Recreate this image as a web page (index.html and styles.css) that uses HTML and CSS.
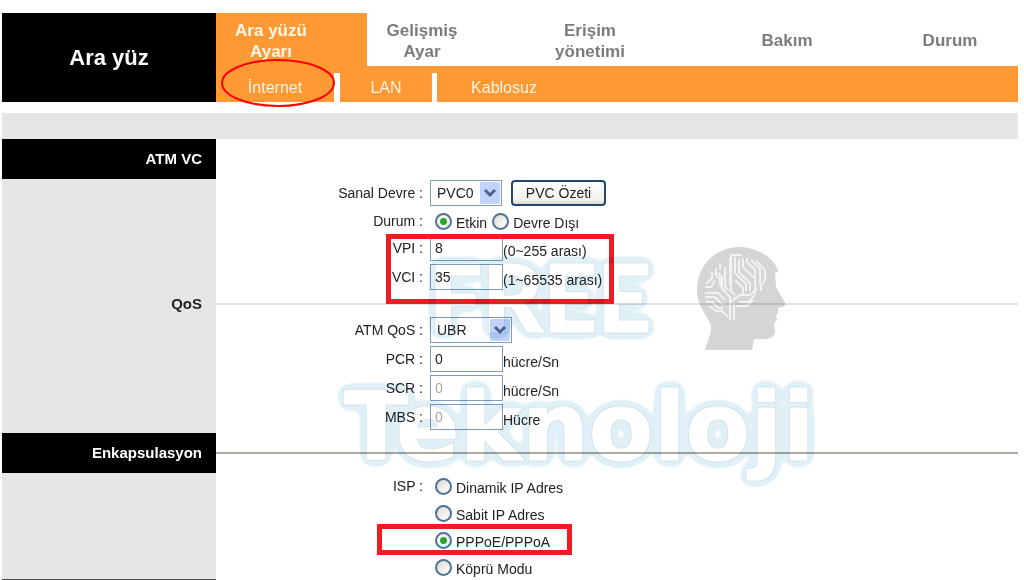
FILE: index.html
```html
<!DOCTYPE html>
<html lang="tr">
<head>
<meta charset="utf-8">
<title>Ara yüz</title>
<link rel="stylesheet" href="styles.css">
</head>
<body>
<div class="page">
  <header class="header">
    <h1 class="brand">Ara yüz</h1>
    <div class="menus">
      <nav class="tabs">
        <a class="tab tab-active" href="#"><span class="tab-text">Ara yüzü Ayarı</span></a>
        <a class="tab" href="#"><span class="tab-text">Gelişmiş Ayar</span></a>
        <a class="tab" href="#"><span class="tab-text">Erişim yönetimi</span></a>
        <a class="tab" href="#"><span class="tab-text">Bakım</span></a>
        <a class="tab" href="#"><span class="tab-text">Durum</span></a>
      </nav>
      <nav class="submenu">
        <a class="sub sub-internet" href="#">İnternet</a>
        <a class="sub sub-lan" href="#">LAN</a>
        <a class="sub sub-wifi" href="#">Kablosuz</a>
      </nav>
      <svg class="ring" viewBox="0 0 116 49" aria-hidden="true"><ellipse cx="58" cy="24" rx="56" ry="23"/></svg>
    </div>
  </header>
  <div class="strip"></div>

  <form class="settings">
    <div class="row heading">
      <h2 class="side side-dark">ATM VC</h2>
    </div>
    <div class="row">
      <div class="side"></div>
      <div class="fields fields-vc">
        <div class="field">
          <label class="name" for="pvc">Sanal Devre :</label>
          <div class="control">
            <span class="picker picker-small">
              <select id="pvc"><option>PVC0</option></select>
              <svg class="arrow" viewBox="0 0 20 22" aria-hidden="true"><rect width="20" height="22" rx="2"/><path d="M5 8l5 5 5-5"/></svg>
            </span>
            <button class="button" type="button">PVC Özeti</button>
          </div>
        </div>
        <div class="field field-status">
          <span class="name">Durum :</span>
          <div class="control">
            <label class="choice"><input type="radio" name="status" checked><span>Etkin</span></label>
            <label class="choice"><input type="radio" name="status"><span>Devre Dışı</span></label>
          </div>
        </div>
        <div class="group marked">
          <div class="field">
            <label class="name" for="vpi">VPI :</label>
            <div class="control"><input class="text" id="vpi" type="text" value="8"><span class="unit">(0~255 arası)</span></div>
          </div>
          <div class="field">
            <label class="name" for="vci">VCI :</label>
            <div class="control"><input class="text" id="vci" type="text" value="35"><span class="unit">(1~65535 arası)</span></div>
          </div>
        </div>
      </div>
    </div>

    <div class="row heading-light">
      <h2 class="side">QoS</h2>
      <hr class="rule">
    </div>
    <div class="row">
      <div class="side"></div>
      <div class="fields fields-qos">
        <div class="field">
          <label class="name" for="qos">ATM QoS :</label>
          <div class="control">
            <span class="picker picker-wide">
              <select id="qos"><option>UBR</option></select>
              <svg class="arrow" viewBox="0 0 20 22" aria-hidden="true"><rect width="20" height="22" rx="2"/><path d="M5 8l5 5 5-5"/></svg>
            </span>
          </div>
        </div>
        <div class="field">
          <label class="name" for="pcr">PCR :</label>
          <div class="control"><input class="text" id="pcr" type="text" value="0"><span class="unit">hücre/Sn</span></div>
        </div>
        <div class="field">
          <label class="name" for="scr">SCR :</label>
          <div class="control"><input class="text" id="scr" type="text" value="0" disabled><span class="unit">hücre/Sn</span></div>
        </div>
        <div class="field">
          <label class="name" for="mbs">MBS :</label>
          <div class="control"><input class="text" id="mbs" type="text" value="0" disabled><span class="unit">Hücre</span></div>
        </div>
      </div>
    </div>

    <div class="row heading">
      <h2 class="side side-dark">Enkapsulasyon</h2>
      <hr class="rule rule-dark">
    </div>
    <div class="row">
      <div class="side side-last"></div>
      <div class="fields fields-isp">
        <div class="field field-choice">
          <span class="name">ISP :</span>
          <div class="control"><label class="choice"><input type="radio" name="isp"><span>Dinamik IP Adres</span></label></div>
        </div>
        <div class="field field-choice">
          <span class="name"></span>
          <div class="control"><label class="choice"><input type="radio" name="isp"><span>Sabit IP Adres</span></label></div>
        </div>
        <div class="field field-choice marked marked-isp">
          <span class="name"></span>
          <div class="control"><label class="choice"><input type="radio" name="isp" checked><span>PPPoE/PPPoA</span></label></div>
        </div>
        <div class="field field-choice">
          <span class="name"></span>
          <div class="control"><label class="choice"><input type="radio" name="isp"><span>Köprü Modu</span></label></div>
        </div>
      </div>
    </div>

    <svg class="watermark" viewBox="0 0 500 260" aria-hidden="true">
      <defs>
        <filter id="halo" filterUnits="userSpaceOnUse" x="0" y="0" width="500" height="260" color-interpolation-filters="sRGB">
          <feGaussianBlur in="SourceAlpha" stdDeviation="6" result="soft"/>
          <feComponentTransfer in="soft" result="wide"><feFuncA type="linear" slope="14" intercept="-1"/></feComponentTransfer>
          <feFlood flood-color="#dff0f7"/>
          <feComposite in2="wide" operator="in" result="blue"/>
          <feMorphology in="SourceAlpha" operator="dilate" radius="1" result="thin"/>
          <feFlood flood-color="#d9e4ec"/>
          <feComposite in2="thin" operator="in" result="edge"/>
          <feMerge><feMergeNode in="blue"/><feMergeNode in="edge"/><feMergeNode in="SourceGraphic"/></feMerge>
        </filter>
      </defs>
      <g class="words" filter="url(#halo)">
        <text class="word-top" x="97" y="91">FREE</text>
        <text class="word-bottom" x="12" y="219">Teknoloji</text>
      </g>
      <path class="head" d="M373 109C376 99 380 91 379 84C375 75 366 65 365 52C364 27 380 7 407 6C424 6 444 17 446 31L443 32L444 46L453 62C454 65 451 66 446 67L446 72L444 75L445 79L442 82L443 90C443 98 434 99 422 98L420 109Z"/>
      <path class="circuit" d="M398 79V56L390 48V36L386 32M402 79V62M397 50L393 45V26M398 44V17M388 22V29M384 27V34L388 38V44L393 50M380 31V37L374 43M383 40L379 46H373M373 52H386L393 59M373 56H383L391 64M374 61H380L386 67H391M377 65L384 70H390L396 76M403 54L399 50V14H410M403 16V32L414 43V50M407 18V31L418 42V50M411 17V26L422 37M415 17V21L423 29V53M419 19L428 28V44M424 20L433 29V39L429 45V50M403 39L411 47V54M403 58L408 54H418L425 48M404 65H415L421 59M407 61H416L423 54M398 62L404 56"/>
    </svg>
  </form>
</div>
</body>
</html>
```
FILE: styles.css
```css
*,
*::after { box-sizing: border-box; }

body {
  margin: 0;
  background: #fff;
  color: #222;
  font: 14px/20px "Liberation Sans", Arial, sans-serif;
}

.page { padding: 13px 6px 0 2px; }

/* header */
.header,
.row {
  display: grid;
  grid-template-columns: 214px 1fr;
}

.brand {
  display: flex;
  align-items: center;
  justify-content: center;
  margin: 0;
  background: #000;
  color: #fff;
  font-size: 22px;
  line-height: 24px;
}

.menus { position: relative; }

.tabs {
  display: grid;
  grid-template-columns: 151fr 168fr 197fr 163fr 123fr;
  height: 53px;
}

.tab {
  display: flex;
  align-items: center;
  padding-top: 2px;
  color: #7c7c7c;
  font-size: 17px;
  font-weight: bold;
  line-height: 21px;
  text-align: center;
  text-decoration: none;
}

.tab-text { width: 110px; padding: 0 12px; }
.tab-active { background: #f93; color: #fff6ea; }

.submenu {
  display: flex;
  height: 36px;
  padding-top: 7px;
  background: #f93;
}

.sub {
  color: #fff3e2;
  font-size: 16px;
  line-height: 29px;
  text-align: center;
  text-decoration: none;
}

.sub-internet { width: 124px; border-right: 6px solid #fff; }
.sub-lan { width: 97px; border-right: 5px solid #fff; }
.sub-wifi { width: 134px; }

.ring {
  position: absolute;
  top: 46px;
  left: 4px;
  width: 116px;
  height: 49px;
  fill: none;
  stroke: #f00;
  stroke-width: 2;
  pointer-events: none;
}

.strip { height: 26px; margin-top: 11px; background: #e6e6e6; }

/* settings */
.settings { position: relative; }
.row { align-items: stretch; }
.heading { height: 40px; }
.heading-light { height: 23px; }

.side {
  display: flex;
  align-items: center;
  justify-content: flex-end;
  margin: 0;
  padding-right: 14px;
  background: #e6e6e6;
  font-size: 15px;
}

.side-dark { background: #000; color: #fff; }
.side-last { border-bottom: 1px solid #444; }

.rule {
  align-self: center;
  width: 100%;
  height: 2px;
  margin: 0;
  border: 0;
  background: #e2e2e2;
}

.rule-dark { background: #aeaa9e; }

.fields,
.group {
  display: flex;
  flex-direction: column;
  gap: 3px;
}

.fields-vc { padding: 1px 0 2px; }
.fields-qos { padding: 2px 0 3px; }
.fields-isp { padding: 1px 0; }

.field {
  display: grid;
  grid-template-columns: 207px 1fr;
  column-gap: 7px;
  align-items: center;
  height: 26px;
}

.field-status { height: 23px; }
.field-choice { height: 24px; }
.name { text-align: right; }
.control { display: flex; height: 100%; align-items: center; }

.text,
.picker select {
  height: 26px;
  border: 1px solid #7f9db9;
  border-radius: 0;
  background: #fff;
  color: #222;
  font: inherit;
}

.text { width: 73px; padding: 0 4px; }
.text:disabled { color: #aca899; }
.unit { align-self: flex-end; }

.picker { position: relative; display: flex; }
.picker select { width: 100%; padding: 0 6px; appearance: none; }
.picker-small { width: 72px; }
.picker-wide { width: 82px; }

.arrow {
  position: absolute;
  top: 2px;
  right: 2px;
  width: 20px;
  height: 22px;
  pointer-events: none;
}

.arrow rect { fill: #c1d3fb; }
.arrow path { fill: none; stroke: #4d6185; stroke-width: 3; }

.button {
  width: 95px;
  height: 26px;
  margin-left: 9px;
  padding: 0;
  border: 2px solid #24486b;
  border-radius: 4px;
  background: linear-gradient(#fff, #f2f1ec 80%, #dcd8cd);
  color: #222;
  font: inherit;
}

.choice { display: flex; align-items: center; gap: 4px; margin-left: 5px; }
.choice span { padding-top: 4px; }

.choice input {
  width: 17px;
  height: 17px;
  margin: 0;
  border: 2px solid #4f7396;
  border-radius: 50%;
  background: linear-gradient(135deg, #dedcd5, #fff);
  appearance: none;
}

.choice input:checked {
  background: radial-gradient(circle, #2aa52a 0 3px, #f4f4f0 4px);
}

/* highlight frames */
.marked { position: relative; }

.marked::after {
  content: "";
  position: absolute;
  top: -1px;
  left: 170px;
  width: 228px;
  height: 70px;
  border: 5px solid #ee1c25;
  pointer-events: none;
}

.marked-isp::after {
  top: -4px;
  left: 161px;
  width: 195px;
  height: 31px;
}

/* watermark */
.watermark {
  position: absolute;
  top: 102px;
  left: 330px;
  width: 500px;
  height: 260px;
  mix-blend-mode: multiply;
  pointer-events: none;
}

.words {
  fill: #fff;
  stroke: #fff;
  stroke-width: 1;
  stroke-linejoin: round;
  font-weight: 900;
}

.word-top { font-family: Lato, "Open Sans", sans-serif; font-size: 94px; }
.word-bottom { font-family: "DejaVu Sans", sans-serif; font-size: 94px; }
.head { fill: #d5d5d5; }
.circuit { fill: none; stroke: #f2f2f2; stroke-width: 2; }
```
